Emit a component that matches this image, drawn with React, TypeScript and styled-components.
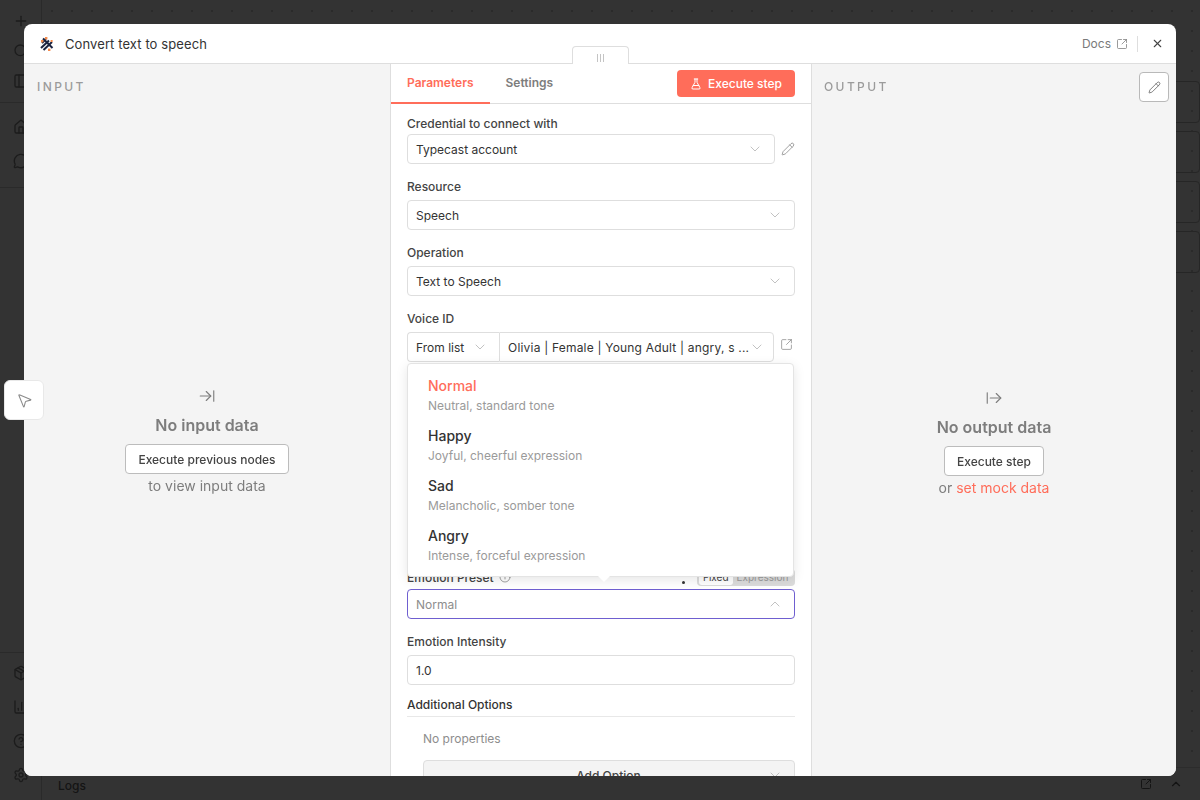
import styled, { createGlobalStyle } from "styled-components"
import {
  ArrowRightFromLine,
  ArrowRightToLine,
  ChartColumn,
  ChevronDown,
  ChevronUp,
  CircleHelp,
  FlaskConical,
  House,
  Info,
  MessageCircle,
  MousePointer2,
  Package,
  PanelLeft,
  Pencil,
  Plus,
  Search,
  Settings,
  SquareArrowOutUpRight,
  X,
} from "lucide-react"

const GlobalStyle = createGlobalStyle`
  html, body {
    margin: 0;
    height: 100%;
    overflow: hidden;
  }
  body {
    font-family: Inter, "Liberation Sans", sans-serif;
    background: #333333;
  }
  * {
    box-sizing: border-box;
  }
`

const Page = styled.div`
  display: flex;
  width: 1200px;
  height: 800px;
  background: #333333;
  overflow: hidden;
`

const Sidebar = styled.aside`
  display: flex;
  flex-direction: column;
  width: 42px;
  flex-shrink: 0;
  border-right: 1px solid #2a2a2a;
  color: #1c1c1c;
`

const SideGroup = styled.div<{ $pad: string; $line?: "top" | "bottom" }>`
  padding: ${(p) => p.$pad};
  border-${(p) => p.$line ?? "bottom"}: 1px solid #2a2a2a;
`

const SideIcon = styled.div<{ $h: number }>`
  display: flex;
  align-items: center;
  justify-content: center;
  width: 41px;
  height: ${(p) => p.$h}px;
`

const SideSpacer = styled.div`
  flex: 1;
`

const Workspace = styled.div`
  flex: 1;
  display: flex;
  flex-direction: column;
`

const Canvas = styled.div`
  flex: 1;
  position: relative;
  background-image: radial-gradient(#2a2a2a 1px, transparent 1px);
  background-size: 20px 20px;
  border-top: 1px solid transparent;
`

const CanvasNode = styled.div<{ $top: number }>`
  position: absolute;
  left: 1110px;
  top: ${(p) => p.$top}px;
  width: 48px;
  height: 42px;
  border: 1px solid #262626;
  border-radius: 4px;
`

const LogsBar = styled.div`
  display: flex;
  align-items: center;
  height: 33px;
  padding: 0 17px 0 16px;
  border-top: 1px solid #2c2c2c;
  color: #141414;
  font-size: 12px;
  font-weight: 500;
`

const LogsTitle = styled.span`
  flex: 1;
  padding-top: 2px;
`

const LogsIcons = styled.div`
  display: flex;
  align-items: center;
  gap: 17px;
`

const Modal = styled.div`
  position: fixed;
  left: 24px;
  top: 24px;
  width: 1152px;
  height: 752px;
  display: flex;
  flex-direction: column;
  background: #ffffff;
  border-radius: 8px;
  overflow: hidden;
`

const ModalHeader = styled.header`
  display: flex;
  align-items: center;
  height: 40px;
  flex-shrink: 0;
  padding: 0 12px 0 16px;
  border-bottom: 1px solid #dedede;
`

const NodeLogo = styled.svg`
  width: 14px;
  height: 14px;
  margin-right: 11px;
`

const NodeName = styled.h1`
  flex: 1;
  margin: 0;
  font-size: 13px;
  font-weight: 400;
  color: #333333;
  letter-spacing: 0.1px;
`

const DocsLink = styled.a`
  display: flex;
  align-items: center;
  gap: 5px;
  font-size: 12px;
  color: #7a7a7a;
`

const HeaderDivider = styled.span`
  width: 1px;
  height: 16px;
  margin: 0 13px 0 9px;
  background: #dedede;
`

const CloseButton = styled.button`
  display: flex;
  padding: 0;
  border: none;
  background: none;
  color: #444444;
`

const Panels = styled.div`
  flex: 1;
  display: flex;
  min-height: 0;
`

const SidePanel = styled.section<{ $width: number; $nudge: number }>`
  display: flex;
  flex-direction: column;
  width: ${(p) => p.$width}px;
  flex-shrink: 0;
  background: #f4f4f4;
  padding-bottom: ${(p) => p.$nudge}px;
`

const PanelHead = styled.div<{ $pad: string }>`
  display: flex;
  align-items: flex-start;
  justify-content: space-between;
  height: 46px;
  padding: ${(p) => p.$pad};
`

const PanelTitle = styled.h2`
  margin: 0;
  padding-top: 7px;
  font-size: 12px;
  font-weight: 500;
  line-height: 16px;
  letter-spacing: 2.4px;
  color: #9b9b9b;
`

const EditButton = styled.button`
  display: flex;
  align-items: center;
  justify-content: center;
  width: 30px;
  height: 30px;
  padding: 0;
  border: 1px solid #b9b9b9;
  border-radius: 4px;
  background: #ffffff;
  color: #444444;
`

const EmptyState = styled.div`
  flex: 1;
  display: flex;
  flex-direction: column;
  align-items: center;
  justify-content: center;
  color: #7d7d7d;
`

const EmptyTitle = styled.h3`
  margin: 10px 0 9px;
  font-size: 16px;
  font-weight: 600;
  line-height: 20px;
  color: #7d7d7d;
`

const OutlineButton = styled.button`
  height: 30px;
  padding: 0 12px;
  border: 1px solid #bcbcbc;
  border-radius: 4px;
  background: #ffffff;
  font-family: inherit;
  font-size: 12px;
  font-weight: 500;
  color: #444444;
`

const EmptyHint = styled.p`
  margin: 3px 0 0;
  font-size: 14px;
  line-height: 18px;
  color: #7d7d7d;
`

const Accent = styled.span`
  color: #ff6d5a;
`

const MainPanel = styled.section`
  position: relative;
  display: flex;
  flex-direction: column;
  width: 422px;
  flex-shrink: 0;
  border-left: 1px solid #dedede;
  border-right: 1px solid #dedede;
  background: #ffffff;
`

const DragHandle = styled.div`
  position: absolute;
  left: 181px;
  top: -18px;
  display: flex;
  align-items: center;
  justify-content: center;
  gap: 2px;
  width: 57px;
  height: 18px;
  padding-top: 4px;
  border: 1px solid #dedede;
  border-bottom: none;
  border-radius: 4px 4px 0 0;
  background: #ffffff;
`

const HandleBar = styled.span`
  width: 1px;
  height: 8px;
  background: #c4c4c4;
`

const TabRow = styled.nav`
  display: flex;
  align-items: center;
  height: 40px;
  flex-shrink: 0;
  padding-right: 16px;
  border-bottom: 1px solid #dedede;
`

const Tab = styled.div<{ $active?: boolean }>`
  display: flex;
  align-items: center;
  height: 40px;
  padding: 0 16px;
  font-size: 12px;
  font-weight: 600;
  color: ${(p) => (p.$active ? "#ff6d5a" : "#7d7d7d")};
  border-bottom: 2px solid ${(p) => (p.$active ? "#ff6d5a" : "transparent")};
`

const RunButton = styled.button`
  display: flex;
  align-items: center;
  gap: 6px;
  height: 27px;
  margin-left: auto;
  padding: 0 13px;
  border: none;
  border-radius: 4px;
  background: #ff6d5a;
  font-family: inherit;
  font-size: 12px;
  font-weight: 500;
  color: #ffffff;
`

const Form = styled.div`
  position: relative;
  flex: 1;
  min-height: 0;
  overflow: hidden;
  padding: 11px 16px 0;
`

const Field = styled.div<{ $top?: number }>`
  margin-top: ${(p) => p.$top ?? 14}px;
`

const FieldLabel = styled.label<{ $gap?: number }>`
  display: block;
  height: 18px;
  margin-bottom: ${(p) => p.$gap ?? 4}px;
  font-size: 12px;
  font-weight: 500;
  line-height: 18px;
  color: #444444;
`

const InputRow = styled.div`
  display: flex;
  align-items: center;
`

const Select = styled.div<{ $open?: boolean; $width?: number }>`
  display: flex;
  align-items: center;
  justify-content: space-between;
  height: 30px;
  flex: ${(p) => (p.$width ? `0 0 ${p.$width}px` : "1")};
  padding: 0 11px 0 8px;
  border: 1px solid ${(p) => (p.$open ? "#6f5fd0" : "#dedede")};
  border-radius: 4px;
  background: #ffffff;
  font-size: 12px;
  color: ${(p) => (p.$open ? "#8d8d8d" : "#444444")};
  color: ${(p) => (p.$open ? "#8d8d8d" : "#333333")};
`

const SelectIcon = styled(ChevronDown)`
  color: #a3a3a3;
  flex-shrink: 0;
`

const RowAction = styled.span<{ $top?: number }>`
  display: flex;
  margin-left: 6px;
  margin-top: ${(p) => p.$top ?? 0}px;
  color: #7d7d7d;
`

const ModeSelect = styled(Select)`
  flex: 0 0 92px;
  border-radius: 4px 0 0 4px;
  border-right: none;
`

const ValueSelect = styled(Select)`
  flex: 0 0 272px;
  padding-right: 8px;
  border-radius: 0 4px 4px 0;
`

const ValueText = styled.span`
  white-space: nowrap;
  letter-spacing: 0.2px;
`

const Menu = styled.div`
  position: absolute;
  left: 16px;
  top: 259px;
  z-index: 2;
  width: 387px;
  height: 214px;
  padding-top: 6px;
  border: 1px solid #e4e4e4;
  border-radius: 4px;
  background: #ffffff;
  box-shadow: 0 3px 12px rgba(0, 0, 0, 0.1);

  &::after {
    content: "";
    position: absolute;
    left: 190px;
    bottom: -6px;
    border-left: 6px solid transparent;
    border-right: 6px solid transparent;
    border-top: 6px solid #ffffff;
  }
`

const MenuItem = styled.div`
  height: 50px;
  padding: 6px 20px 0;
`

const MenuTitle = styled.div<{ $selected?: boolean }>`
  font-size: 14px;
  font-weight: 500;
  line-height: 20px;
  color: ${(p) => (p.$selected ? "#ff6d5a" : "#333333")};
`

const MenuHint = styled.div`
  font-size: 12px;
  line-height: 20px;
  color: #9a9a9a;
`

const PresetHead = styled.div`
  display: flex;
  align-items: center;
  height: 18px;
  margin-bottom: 3px;
`

const PresetLabel = styled.span`
  display: flex;
  align-items: center;
  gap: 5px;
  flex: 1;
  font-size: 12px;
  font-weight: 500;
  color: #444444;
`

const MoreDot = styled.span`
  width: 3px;
  height: 3px;
  margin-right: 12px;
  margin-top: 11px;
  border-radius: 50%;
  background: #333333;
`

const Toggle = styled.div`
  display: flex;
  align-items: center;
  width: 98px;
  height: 17px;
  padding: 0 2px;
  border-radius: 4px;
  background: #dcdcdc;
  font-size: 10px;
  color: #9a9a9a;
`

const ToggleOn = styled.span`
  padding: 0 4px;
  margin-right: 4px;
  border-radius: 3px;
  background: #ffffff;
  line-height: 15px;
  color: #444444;
`

const TextInput = styled.div`
  display: flex;
  align-items: center;
  height: 30px;
  padding: 0 8px;
  border: 1px solid #dedede;
  border-radius: 4px;
  font-size: 12px;
  color: #333333;
`

const SectionHead = styled.div`
  height: 21px;
  margin-top: 11px;
  border-bottom: 1px solid #e8e8e8;
  font-size: 12px;
  font-weight: 500;
  line-height: 18px;
  color: #333333;
`

const SectionBody = styled.div`
  padding: 13px 0 0 16px;
`

const NoProps = styled.p`
  margin: 0 0 12px;
  font-size: 12px;
  line-height: 18px;
  color: #8d8d8d;
`

const AddOption = styled.div`
  position: relative;
  display: flex;
  align-items: center;
  justify-content: center;
  height: 30px;
  padding-right: 1px;
  border: 1px solid #dedede;
  border-radius: 4px;
  background: #f4f4f4;
  font-size: 12px;
  font-weight: 500;
  color: #444444;

  svg {
    position: absolute;
    right: 11px;
    color: #a3a3a3;
  }
`

const FloatingTool = styled.div`
  position: fixed;
  left: 4px;
  top: 380px;
  display: flex;
  align-items: center;
  justify-content: center;
  width: 40px;
  height: 40px;
  border: 1px solid #e8e8e8;
  border-radius: 6px;
  background: #ffffff;
  color: #8a8a8a;
`

const emotions = [
  { name: "Normal", hint: "Neutral, standard tone" },
  { name: "Happy", hint: "Joyful, cheerful expression" },
  { name: "Sad", hint: "Melancholic, somber tone" },
  { name: "Angry", hint: "Intense, forceful expression" },
]

function Logo() {
  return (
    <NodeLogo viewBox="0 0 14 14">
      <path d="M3 1.5L12.5 11M6 2L2 6M12 5L3.5 13M9 3.5L1 11" stroke="#1b2340" strokeWidth="2" fill="none" />
      <rect x="1" y="3" width="2.4" height="2.4" fill="#f58a4b" />
      <rect x="5" y="0" width="2.4" height="2.4" fill="#f58a4b" />
      <rect x="10.6" y="3" width="2" height="2" fill="#f58a4b" />
      <rect x="8" y="11.6" width="2.4" height="2.4" fill="#f58a4b" />
    </NodeLogo>
  )
}

function App() {
  return (
    <>
      <GlobalStyle />
      <Page>
        <Sidebar>
          <SideGroup $pad="6px 0">
            <SideIcon $h={30}><Plus size={16} /></SideIcon>
            <SideIcon $h={30}><Search size={16} /></SideIcon>
            <SideIcon $h={30}><PanelLeft size={16} /></SideIcon>
          </SideGroup>
          <SideGroup $pad="7px 0 9px">
            <SideIcon $h={34}><House size={16} /></SideIcon>
            <SideIcon $h={34}><MessageCircle size={16} /></SideIcon>
          </SideGroup>
          <SideSpacer />
          <SideGroup $pad="3px 0 8px" $line="top">
            <SideIcon $h={34}><Package size={16} /></SideIcon>
            <SideIcon $h={34}><ChartColumn size={16} /></SideIcon>
            <SideIcon $h={34}><CircleHelp size={16} /></SideIcon>
            <SideIcon $h={34}><Settings size={16} /></SideIcon>
          </SideGroup>
        </Sidebar>
        <Workspace>
          <Canvas>
            <CanvasNode $top={80} />
            <CanvasNode $top={130} />
            <CanvasNode $top={180} />
            <CanvasNode $top={230} />
          </Canvas>
          <LogsBar>
            <LogsTitle>Logs</LogsTitle>
            <LogsIcons>
              <SquareArrowOutUpRight size={12} />
              <ChevronUp size={14} />
            </LogsIcons>
          </LogsBar>
        </Workspace>
      </Page>

      <Modal>
        <ModalHeader>
          <Logo />
          <NodeName>Convert text to speech</NodeName>
          <DocsLink>
            Docs <SquareArrowOutUpRight size={12} strokeWidth={1.5} />
          </DocsLink>
          <HeaderDivider />
          <CloseButton><X size={13} /></CloseButton>
        </ModalHeader>
        <Panels>
          <SidePanel $width={366} $nudge={4}>
            <PanelHead $pad="8px 12px 0 13px">
              <PanelTitle>INPUT</PanelTitle>
            </PanelHead>
            <EmptyState>
              <ArrowRightToLine size={18} strokeWidth={1.5} />
              <EmptyTitle>No input data</EmptyTitle>
              <OutlineButton>Execute previous nodes</OutlineButton>
              <EmptyHint>to view input data</EmptyHint>
            </EmptyState>
          </SidePanel>

          <MainPanel>
            <DragHandle>
              <HandleBar />
              <HandleBar />
              <HandleBar />
            </DragHandle>
            <TabRow>
              <Tab $active>Parameters</Tab>
              <Tab>Settings</Tab>
              <RunButton>
                <FlaskConical size={12} />
                Execute step
              </RunButton>
            </TabRow>
            <Form>
              <Field $top={0}>
                <FieldLabel $gap={1}>Credential to connect with</FieldLabel>
                <InputRow>
                  <Select>
                    Typecast account
                    <SelectIcon size={16} strokeWidth={1} />
                  </Select>
                  <RowAction><Pencil size={14} strokeWidth={1.25} /></RowAction>
                </InputRow>
              </Field>
              <Field>
                <FieldLabel>Resource</FieldLabel>
                <Select>
                  Speech
                  <SelectIcon size={16} strokeWidth={1} />
                </Select>
              </Field>
              <Field>
                <FieldLabel>Operation</FieldLabel>
                <Select>
                  Text to Speech
                  <SelectIcon size={16} strokeWidth={1} />
                </Select>
              </Field>
              <Field>
                <FieldLabel>Voice ID</FieldLabel>
                <InputRow>
                  <ModeSelect>
                    From list
                    <SelectIcon size={16} strokeWidth={1} />
                  </ModeSelect>
                  <ValueSelect>
                    <ValueText>Olivia | Female | Young Adult | angry, s ...</ValueText>
                    <SelectIcon size={16} strokeWidth={1} />
                  </ValueSelect>
                  <RowAction $top={-6}>
                    <SquareArrowOutUpRight size={13} strokeWidth={1.25} />
                  </RowAction>
                </InputRow>
              </Field>

              <Menu>
                {emotions.map((emotion, i) => (
                  <MenuItem key={emotion.name}>
                    <MenuTitle $selected={i === 0}>{emotion.name}</MenuTitle>
                    <MenuHint>{emotion.hint}</MenuHint>
                  </MenuItem>
                ))}
              </Menu>

              <Field $top={206}>
                <PresetHead>
                  <PresetLabel>
                    Emotion Preset <Info size={12} strokeWidth={1} />
                  </PresetLabel>
                  <MoreDot />
                  <Toggle>
                    <ToggleOn>Fixed</ToggleOn>
                    Expression
                  </Toggle>
                </PresetHead>
                <Select $open>
                  Normal
                  <ChevronUp size={16} strokeWidth={1} color="#a3a3a3" />
                </Select>
              </Field>
              <Field>
                <FieldLabel>Emotion Intensity</FieldLabel>
                <TextInput>1.0</TextInput>
              </Field>
              <SectionHead>Additional Options</SectionHead>
              <SectionBody>
                <NoProps>No properties</NoProps>
                <AddOption>
                  Add Option
                  <ChevronDown size={16} strokeWidth={1} />
                </AddOption>
              </SectionBody>
            </Form>
          </MainPanel>

          <SidePanel $width={364} $nudge={0}>
            <PanelHead $pad="8px 7px 0 12px">
              <PanelTitle>OUTPUT</PanelTitle>
              <EditButton><Pencil size={13} strokeWidth={1.25} /></EditButton>
            </PanelHead>
            <EmptyState>
              <ArrowRightFromLine size={18} strokeWidth={1.5} />
              <EmptyTitle>No output data</EmptyTitle>
              <OutlineButton>Execute step</OutlineButton>
              <EmptyHint>
                or <Accent>set mock data</Accent>
              </EmptyHint>
            </EmptyState>
          </SidePanel>
        </Panels>
      </Modal>

      <FloatingTool>
        <MousePointer2 size={17} strokeWidth={1.5} />
      </FloatingTool>
    </>
  )
}

export default App
